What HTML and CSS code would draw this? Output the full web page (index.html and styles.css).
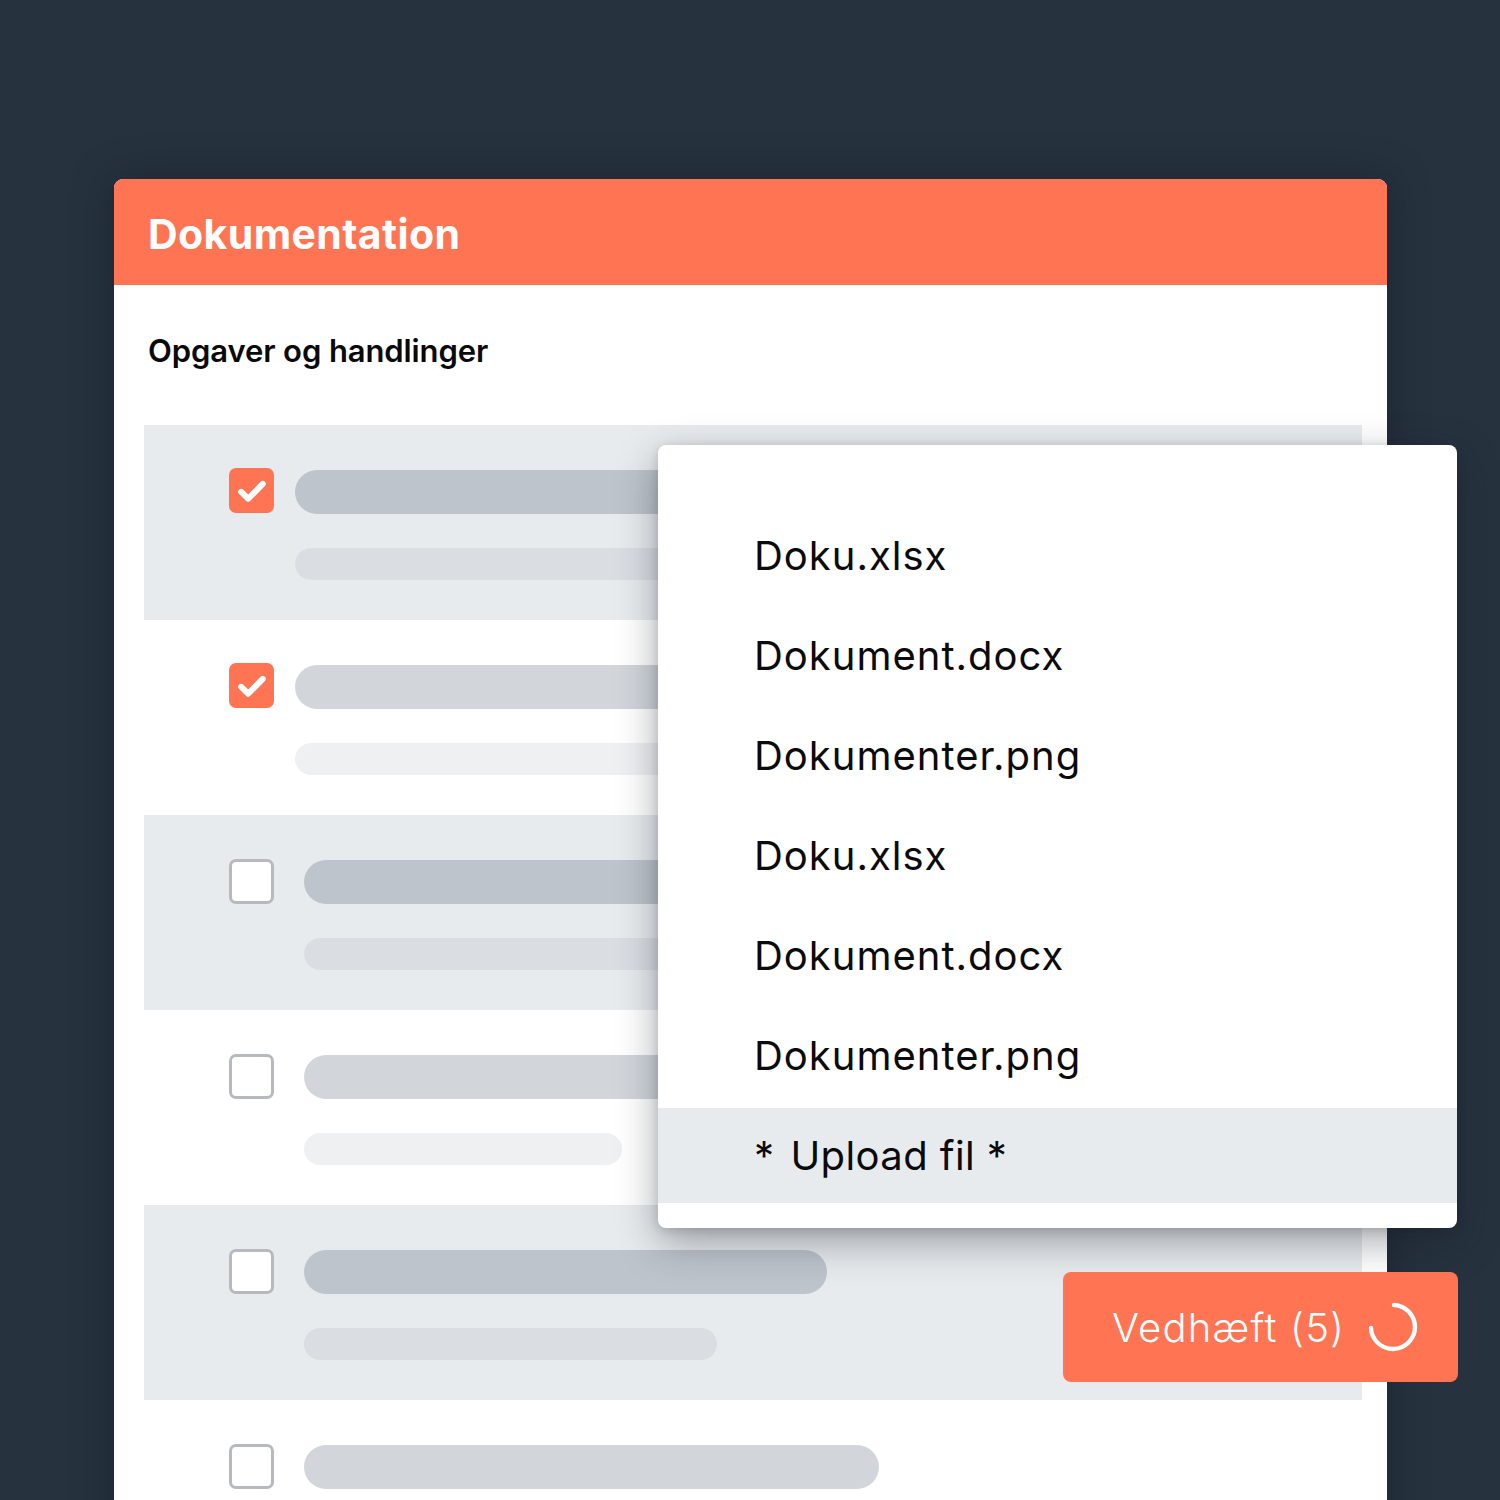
FILE: index.html
```html
<!DOCTYPE html>
<html lang="da">
<head>
<meta charset="utf-8">
<title>Dokumentation</title>
<link rel="stylesheet" href="styles.css">
</head>
<body>
<div class="stage">
  <section class="card">
    <header class="card-header">
      <h1 class="card-title">Dokumentation</h1>
    </header>
    <div class="card-body">
      <h2 class="section-title">Opgaver og handlinger</h2>
      <ul class="task-list">
        <li class="task task--shaded task--checked">
          <span class="checkbox checkbox--checked">
            <svg viewBox="0 0 24 24" class="check-icon"><path d="M5.2 12.6l4.4 4.3 9.2-9.4" fill="none" stroke="#fff" stroke-width="3.8" stroke-linecap="round" stroke-linejoin="round"/></svg>
          </span>
          <div class="task-lines">
            <span class="line line--main" style="width:820px"></span>
            <span class="line line--sub" style="width:820px"></span>
          </div>
        </li>
        <li class="task task--checked">
          <span class="checkbox checkbox--checked">
            <svg viewBox="0 0 24 24" class="check-icon"><path d="M5.2 12.6l4.4 4.3 9.2-9.4" fill="none" stroke="#fff" stroke-width="3.8" stroke-linecap="round" stroke-linejoin="round"/></svg>
          </span>
          <div class="task-lines">
            <span class="line line--main" style="width:760px"></span>
            <span class="line line--sub" style="width:600px"></span>
          </div>
        </li>
        <li class="task task--shaded">
          <span class="checkbox"></span>
          <div class="task-lines">
            <span class="line line--main" style="width:800px"></span>
            <span class="line line--sub" style="width:760px"></span>
          </div>
        </li>
        <li class="task">
          <span class="checkbox"></span>
          <div class="task-lines">
            <span class="line line--main" style="width:700px"></span>
            <span class="line line--sub" style="width:318px"></span>
          </div>
        </li>
        <li class="task task--shaded">
          <span class="checkbox"></span>
          <div class="task-lines">
            <span class="line line--main" style="width:523px"></span>
            <span class="line line--sub" style="width:413px"></span>
          </div>
        </li>
        <li class="task">
          <span class="checkbox"></span>
          <div class="task-lines">
            <span class="line line--main" style="width:575px"></span>
            <span class="line line--sub" style="width:420px"></span>
          </div>
        </li>
      </ul>
    </div>

    <div class="dropdown">
      <ul class="dropdown-list">
        <li class="dropdown-item">Doku.xlsx</li>
        <li class="dropdown-item">Dokument.docx</li>
        <li class="dropdown-item">Dokumenter.png</li>
        <li class="dropdown-item">Doku.xlsx</li>
        <li class="dropdown-item">Dokument.docx</li>
        <li class="dropdown-item">Dokumenter.png</li>
        <li class="dropdown-item dropdown-item--active"><span class="star">*</span>Upload fil *</li>
      </ul>
    </div>

    <button class="attach-btn" type="button">
      <span class="attach-label">Vedhæft (5)</span>
      <svg class="spinner" viewBox="0 0 52 52"><path d="M27 4 A22 22 0 1 1 4 27" fill="none" stroke="#fff" stroke-width="4.4" stroke-linecap="round"/></svg>
    </button>
  </section>
</div>
</body>
</html>
```

FILE: styles.css
```css
* { box-sizing: border-box; }

html, body {
  margin: 0;
  padding: 0;
}

body {
  background: #27323f;
  font-family: Inter, "Noto Sans", "Liberation Sans", sans-serif;
  height: 1500px;
  overflow: hidden;
}

.stage {
  padding: 179px 0 0 114px;
}

.card {
  position: relative;
  width: 1273px;
  height: 1400px;
  background: #ffffff;
  border-radius: 9px 9px 0 0;
  box-shadow: 0 0 40px rgba(10, 15, 25, 0.35);
}

.card-header {
  height: 106px;
  background: #ff7452;
  border-radius: 9px 9px 0 0;
  display: flex;
  align-items: center;
  padding-left: 34px;
}

.card-title {
  margin: 0;
  color: #ffffff;
  font-size: 41px;
  font-weight: 700;
  letter-spacing: 0.4px;
  line-height: 1;
  padding-top: 4px;
}

.card-body {
  padding: 48px 25px 0 30px;
}

.section-title {
  margin: 0 0 56px 4px;
  font-size: 31px;
  font-weight: 600;
  line-height: 36px;
  color: #0a0a0a;
  letter-spacing: -0.1px;
}

.task-list {
  list-style: none;
  margin: 0;
  padding: 0;
}

.task {
  height: 195px;
  display: flex;
  align-items: flex-start;
  padding: 43px 0 0 85px;
  background: #ffffff;
}

.task--shaded {
  background: #e8ebee;
}

.checkbox {
  flex: none;
  width: 45px;
  height: 45px;
  margin-top: 1px;
  border: 3px solid #b6babf;
  border-radius: 7px;
  background: #ffffff;
  display: flex;
  align-items: center;
  justify-content: center;
}

.checkbox--checked {
  margin-top: 0;
  background: #ff7452;
  border: none;
}

.check-icon {
  width: 38px;
  height: 38px;
}

.task-lines {
  display: flex;
  flex-direction: column;
  gap: 34px;
  margin-left: 30px;
  padding-top: 2px;
}

.task--checked .task-lines {
  margin-left: 21px;
}

.line {
  display: block;
  border-radius: 22px;
}

.line--main {
  height: 44px;
  background: #d2d6db;
}

.line--sub {
  height: 32px;
  background: #eff0f2;
}

.task--shaded .line--main {
  background: #bec4cc;
}

.task--shaded .line--sub {
  background: #dadee3;
}

/* dropdown overlay */
.dropdown {
  position: absolute;
  left: 544px;
  top: 266px;
  width: 799px;
  height: 783px;
  background: #ffffff;
  border-radius: 8px;
  box-shadow: 0 14px 40px rgba(20, 28, 40, 0.38), 0 2px 10px rgba(20, 28, 40, 0.15);
  padding-top: 63px;
}

.dropdown-list {
  list-style: none;
  margin: 0;
  padding: 0;
  display: flex;
  flex-direction: column;
  gap: 5px;
}

.dropdown-item {
  height: 95px;
  display: flex;
  align-items: center;
  padding-left: 96px;
  font-size: 40px;
  font-weight: 400;
  letter-spacing: 1px;
  color: #0b0b0b;
}

.dropdown-item--active {
  background: #e8ebee;
  letter-spacing: 0.4px;
}

.star {
  margin-right: 16px;
}

/* attach button */
.attach-btn {
  position: absolute;
  left: 949px;
  top: 1093px;
  width: 395px;
  height: 110px;
  border: none;
  border-radius: 8px;
  background: #ff7452;
  display: flex;
  align-items: center;
  padding: 0 0 0 49px;
  font-family: inherit;
  cursor: pointer;
}

.attach-label {
  color: #ffffff;
  font-size: 40px;
  font-weight: 300;
  letter-spacing: 1.2px;
}

.spinner {
  width: 52px;
  height: 52px;
  margin-left: 22px;
}
```
